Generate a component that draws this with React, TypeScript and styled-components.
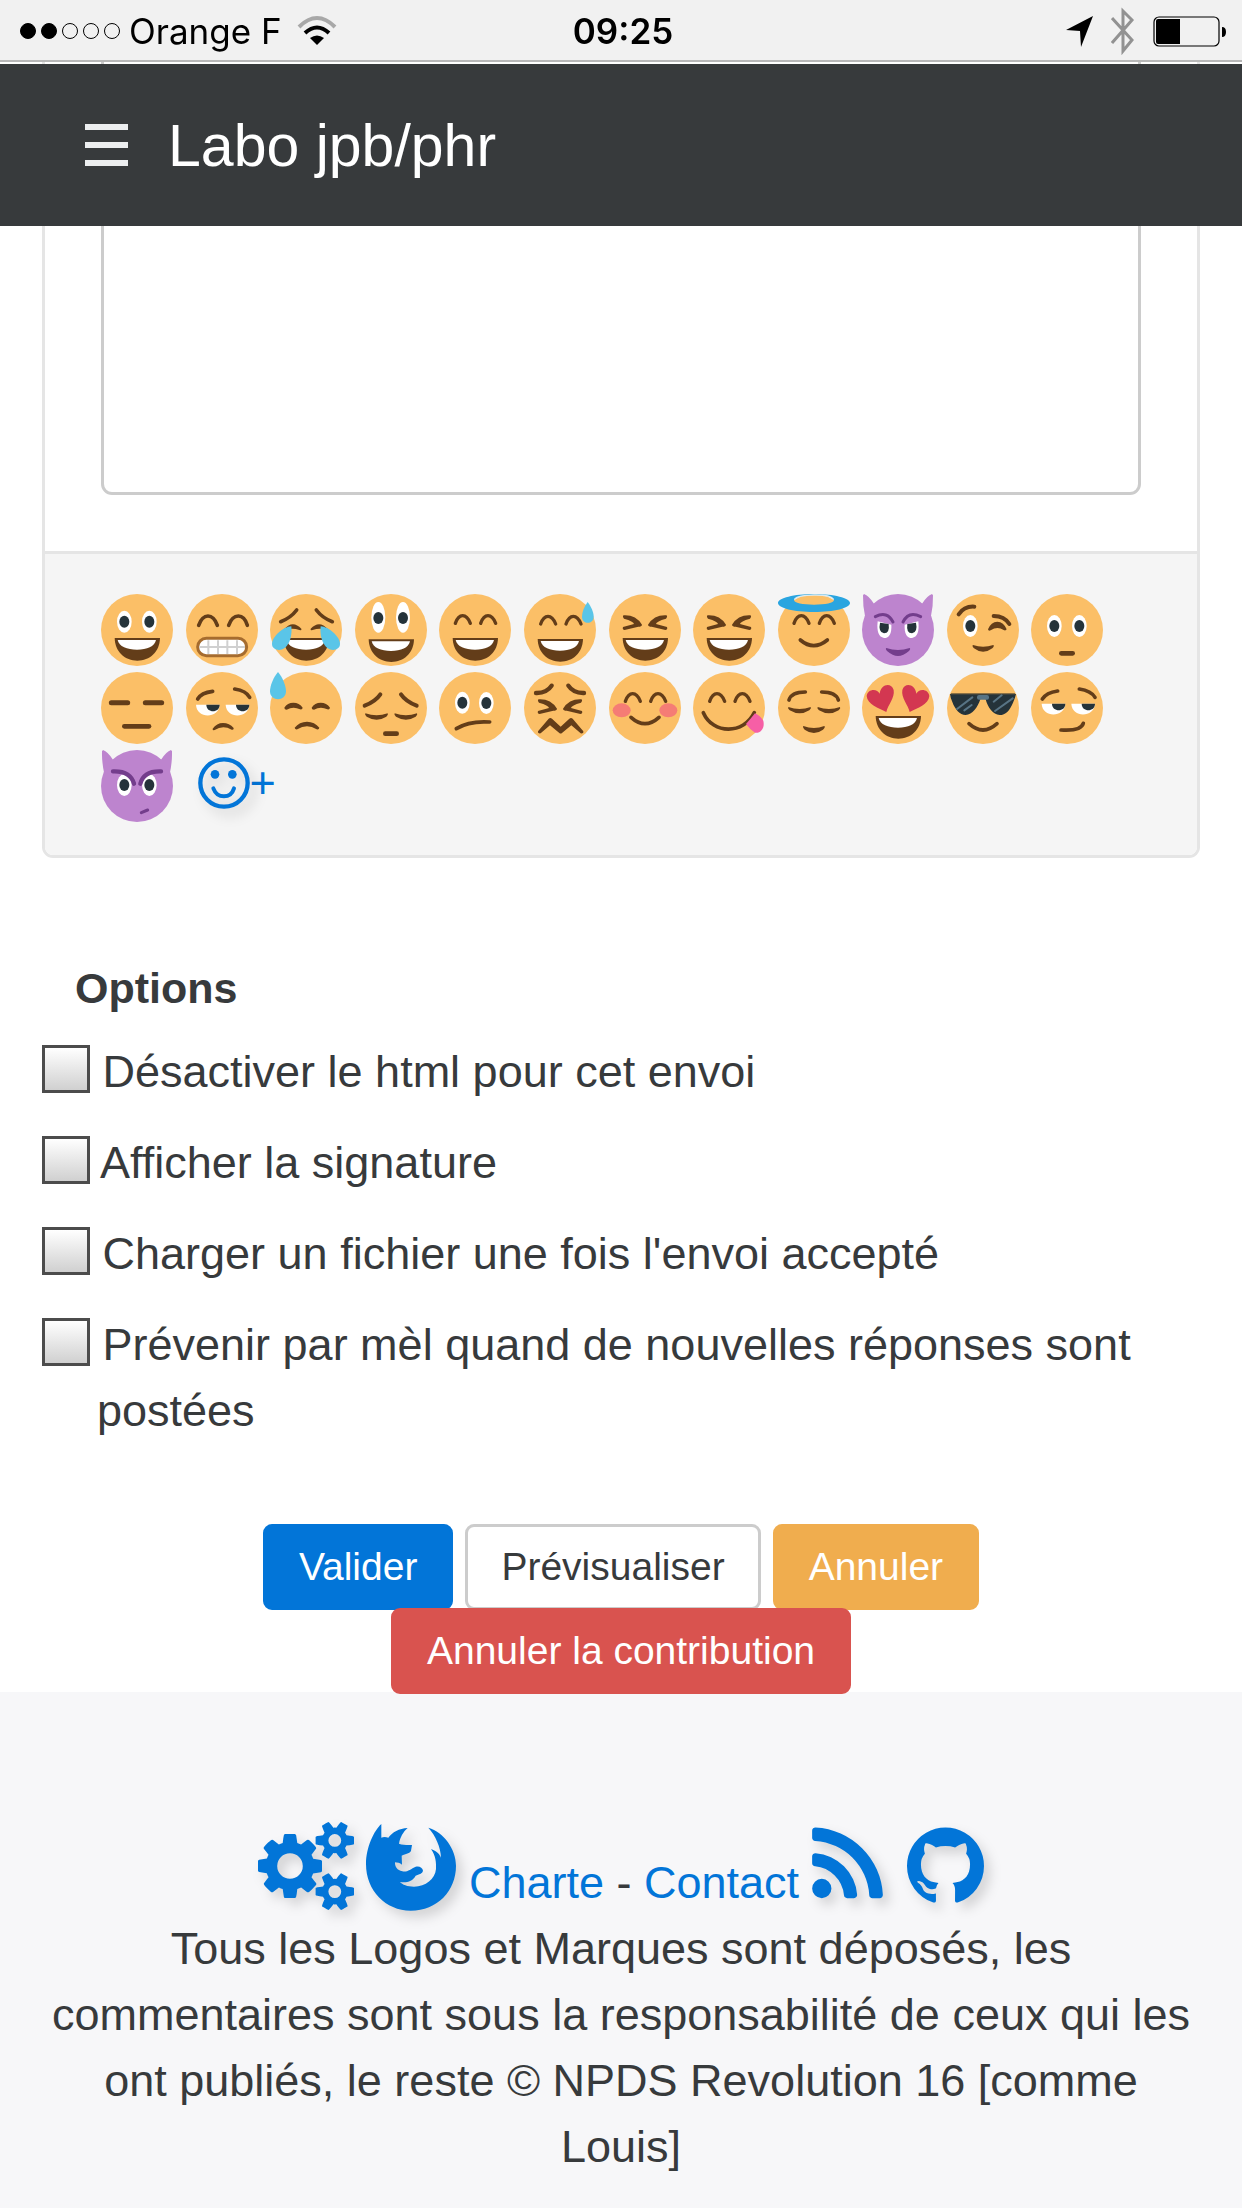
import React from "react";
import styled, { createGlobalStyle, css } from "styled-components";

const GlobalStyle = createGlobalStyle`
  *, *::before, *::after { box-sizing: border-box; }
  body {
    margin: 0;
    background: #fff;
    color: #373a3c;
    font-family: "Liberation Sans", Arial, sans-serif;
    font-size: 45px;
    line-height: 66px;
  }
`;

/* ---------- Layout ---------- */

const Page = styled.div`
  display: flex;
  flex-direction: column;
  min-height: 100vh;
`;

const TopBars = styled.div`
  position: fixed;
  top: 0;
  left: 0;
  right: 0;
  z-index: 10;
`;

const StatusBar = styled.div`
  display: grid;
  grid-template-columns: 1fr auto 1fr;
  align-items: center;
  height: 62px;
  margin-bottom: 2px;
  padding: 2px 16px 0 20px;
  background: #f1f1f1;
  border-bottom: 2px solid #b8b8b8;
  color: #000;
  font-family: Inter, Roboto, sans-serif;
  font-size: 35px;
  line-height: 58px;
`;

const StatusGroup = styled.div<{ $end?: boolean }>`
  display: flex;
  align-items: center;
  gap: ${(p) => (p.$end ? "18px" : "9px")};
  justify-content: ${(p) => (p.$end ? "flex-end" : "flex-start")};
`;

const Dots = styled.div`
  display: flex;
  gap: 5px;
`;

const Dot = styled.span<{ $on?: boolean }>`
  width: 16px;
  height: 16px;
  border: 1px solid #000;
  border-radius: 50%;
  background: ${(p) => (p.$on ? "#000" : "transparent")};
`;

const Clock = styled.time`
  font-weight: 600;
`;

const Navbar = styled.nav`
  display: flex;
  align-items: center;
  gap: 38px;
  height: 162px;
  padding: 0 84px;
  background: #373a3c;
`;

const MenuButton = styled.button`
  display: flex;
  padding: 0;
  border: 0;
  background: none;
  color: #eceeef;
`;

const Brand = styled.a`
  padding-top: 2px;
  color: #fff;
  font-size: 59px;
  line-height: 88px;
  text-decoration: none;
`;

const Main = styled.main`
  position: relative;
  padding: 0 42px;
`;

/* ---------- Message editor ---------- */

const Card = styled.div`
  border: 3px solid #e5e5e5;
  border-top: 0;
  border-radius: 0 0 11px 11px;
`;

const CardBody = styled.div`
  padding: 0 56px 56px;
`;

const Message = styled.textarea`
  display: block;
  width: 100%;
  height: 495px;
  padding: 16px 32px;
  border: 3px solid #ccc;
  border-radius: 11px;
  background: #fff;
  color: inherit;
  font: inherit;
  resize: none;
`;

const CardFooter = styled.div`
  padding: 40px 56px 33px;
  border-top: 3px solid #e5e5e5;
  border-radius: 0 0 8px 8px;
  background: #f5f5f5;
`;

const EmojiGrid = styled.div`
  display: grid;
  grid-template-columns: repeat(auto-fill, minmax(84px, 1fr));
  gap: 6px 0;
  margin-right: 25px;
`;

const EmojiButton = styled.button`
  display: flex;
  width: 72px;
  height: 72px;
  padding: 0;
  border: 0;
  background: none;
`;

const iconShadow = css`
  filter: drop-shadow(6px 7px 6px rgba(0, 0, 0, 0.14));
`;

const MoreSmileys = styled.a`
  display: flex;
  align-items: center;
  height: 66px;
  padding-left: 12px;
  color: #0275d8;
  text-decoration: none;
  svg {
    flex: none;
    ${iconShadow}
  }
`;

/* ---------- Options ---------- */

const Options = styled.fieldset`
  display: flex;
  flex-direction: column;
  gap: 25px;
  min-width: 0;
  margin: 97px 0 80px;
  padding: 0;
  border: 0;
`;

const OptionsTitle = styled.legend`
  margin-bottom: 18px;
  padding: 0 33px;
  font-size: 43px;
  font-weight: 700;
`;

const Option = styled.label`
  display: block;
  padding-left: 55px;
`;

const Checkbox = styled.input`
  appearance: none;
  width: 48px;
  height: 48px;
  margin: 0 0 0 -55px;
  border: 3px solid #4c4c4c;
  background: linear-gradient(#fff, #d0d0d0);
  vertical-align: -6px;
  &:checked {
    background: #0275d8;
  }
`;

const Actions = styled.div`
  display: flex;
  flex-wrap: wrap;
  justify-content: center;
  gap: 0 12px;
`;

const tones = {
  primary: css`
    background: #0275d8;
    border-color: #0275d8;
    color: #fff;
  `,
  secondary: css`
    background: #fff;
    border-color: #ccc;
    color: #373a3c;
  `,
  warning: css`
    background: #f0ad4e;
    border-color: #f0ad4e;
    color: #fff;
  `,
  danger: css`
    background: #d9534f;
    border-color: #d9534f;
    color: #fff;
  `,
};

const Button = styled.button<{ $tone: keyof typeof tones }>`
  height: 86px;
  margin-bottom: -2px;
  padding: 0 33px;
  border: 3px solid;
  border-radius: 9px;
  font-family: inherit;
  font-size: 39px;
  line-height: 58px;
  ${(p) => tones[p.$tone]}
`;

/* ---------- Footer ---------- */

const Footer = styled.footer`
  flex: 1;
  padding: 129px 42px 27px;
  background: #f7f7f9;
  text-align: center;
`;

const FooterText = styled.p`
  margin: 0;
`;

const FooterLink = styled.a`
  color: #0275d8;
  text-decoration: none;
`;

const Glyph = styled.svg<{ $spaced?: boolean }>`
  height: 90px;
  margin-left: ${(p) => (p.$spaced ? "12px" : "0")};
  vertical-align: -13px;
  fill: currentColor;
  ${iconShadow}
`;

/* ---------- Smileys: drawn on a 216-unit square ---------- */

const SKIN = "#fbbf67";
const BROWN = "#633d19";
const INK = "#25333a";
const PLUM = "#733d8c";

const Line = ({ d, w = 11, c = BROWN }: { d: string; w?: number; c?: string }) => (
  <path d={d} fill="none" stroke={c} strokeWidth={w} strokeLinecap="round" strokeLinejoin="round" />
);

const Fill = ({ d, c = BROWN }: { d: string; c?: string }) => <path d={d} fill={c} />;

const Eye = ({ x, y }: { x: number; y: number }) => (
  <>
    <ellipse cx={x} cy={y} rx="22" ry="33" fill="#fff" />
    <ellipse cx={x} cy={y} rx="15" ry="18" fill={INK} />
  </>
);

const Grin = ({ y = 132 }: { y?: number }) => (
  <g transform={`translate(0 ${y})`}>
    <Fill d="M41 0H177C176 42 146 68 109 68S42 42 41 0Z" />
    <Fill d="M50 6H165C161 26 138 35 108 35S54 26 50 6Z" c="#fff" />
  </g>
);

const HappyEyes = ({ dx = 0, y = 0 }: { dx?: number; y?: number }) => (
  <g transform={`translate(${dx} ${y})`}>
    <Line d="M49 88Q57 65 71 65T94 88" w={10} />
    <Line d="M125 88Q133 65 147 65T170 88" w={10} />
  </g>
);

const SqueezedEyes = ({ y = 0 }: { y?: number }) => (
  <g transform={`translate(0 ${y})`}>
    <Fill d="M44 64Q80 62 99 92Q98 98 88 98L47 108Q39 107 42 99L75 90Q74 82 45 74Q39 67 44 64Z" />
    <Fill d="M172 64Q136 62 117 92Q118 98 128 98L169 108Q177 107 174 99L141 90Q142 82 171 74Q177 67 172 64Z" />
  </g>
);

const ShutEyes = ({ y = 0 }: { y?: number }) => (
  <g transform={`translate(0 ${y})`}>
    <Fill d="M31 0Q65 12 98 0Q101 4 94 10Q65 28 35 10Q28 4 31 0Z" />
    <Fill d="M119 0Q153 12 186 0Q189 4 182 10Q153 28 123 10Q116 4 119 0Z" />
  </g>
);

const HalfEyes = () => (
  <>
    <Fill d="M30 98H101C99 140 32 142 30 98Z" c="#fff" />
    <Fill d="M61 98H101C101 124 61 124 61 98Z" c={INK} />
    <Fill d="M119 98H190C188 140 121 142 119 98Z" c="#fff" />
    <Fill d="M150 98H190C190 124 150 124 150 98Z" c={INK} />
  </>
);

const Horns = () => (
  <Fill d="M6 0Q20 4 38 32L10 72Q2 36 3 4ZM210 0Q196 4 178 32L206 72Q214 36 213 4Z" c="#bd84ce" />
);

const faces: { name: string; color?: string; art: React.ReactNode }[] = [
  { name: "Sourire", art: <><Eye x={70} y={83} /><Eye x={145} y={83} /><Grin /></> },
  {
    name: "Grimace",
    art: (
      <>
        <Line d="M38 94Q48 66 66 66T94 94" />
        <Line d="M128 94Q138 66 157 66T184 94" />
        <rect x="35" y="133" width="147" height="52" rx="26" fill="#fff" stroke="#a66c2e" strokeWidth="9" />
        <path d="M40 159H177M67 139V180M96 139V180M124 139V180M153 139V180" stroke="#d0d0d0" strokeWidth="6" />
      </>
    ),
  },
  {
    name: "Larmes de joie",
    art: (
      <>
        <Line d="M32 83Q62 72 80 48" />
        <Line d="M139 48Q157 72 187 83" />
        <Fill d="M42 106Q68 76 94 104Q96 110 88 108Q66 100 48 108Z" />
        <Fill d="M174 106Q148 76 122 104Q120 110 128 108Q150 100 168 108Z" />
        <Grin />
        <Fill d="M64 97C40 98 6 128 6 150C6 166 28 174 44 162C60 150 67 122 64 97Z" c="#5ac5e8" />
        <Fill d="M152 97C176 98 210 128 210 150C210 166 188 174 172 162C156 150 149 122 152 97Z" c="#5ac5e8" />
      </>
    ),
  },
  {
    name: "Grand sourire",
    art: (
      <>
        <ellipse cx="70" cy="70" rx="21" ry="46" fill="#fff" />
        <ellipse cx="144" cy="70" rx="21" ry="46" fill="#fff" />
        <ellipse cx="70" cy="72" rx="15" ry="18" fill={INK} />
        <ellipse cx="144" cy="72" rx="15" ry="18" fill={INK} />
        <Grin y={136} />
      </>
    ),
  },
  { name: "Rire", art: <><HappyEyes /><Grin /></> },
  {
    name: "Sueur",
    art: (
      <>
        <HappyEyes dx={1} y={2} />
        <Grin y={135} />
        <Fill d="M191 24C202 38 209 56 209 68C209 92 174 92 174 68C174 56 180 38 191 24Z" c="#5ac5e8" />
      </>
    ),
  },
  { name: "Éclat de rire", art: <><SqueezedEyes /><Grin /></> },
  { name: "Mort de rire", art: <><SqueezedEyes /><Grin /></> },
  {
    name: "Ange",
    art: (
      <>
        <HappyEyes dx={-1} />
        <Line d="M67 138Q107 172 148 138" />
        <path
          d="M108 0C168 0 216 12 216 27S168 54 108 54S0 42 0 27S48 0 108 0ZM108 3C74 3 48 9 48 18S74 32 108 32S168 27 168 18S142 3 108 3Z"
          fill="#2aa5e0"
          fillRule="evenodd"
        />
        <path d="M50 15Q60 4 108 3T166 15" fill="none" stroke="#dcebf0" strokeWidth="4" />
      </>
    ),
  },
  {
    name: "Démon souriant",
    color: "#bd84ce",
    art: (
      <>
        <Horns />
        <Fill d="M47 82L88 92Q90 132 66 132Q42 128 47 82Z" c="#fff" />
        <Fill d="M169 82L128 92Q126 132 150 132Q174 128 169 82Z" c="#fff" />
        <Fill d="M54 86L80 90Q84 118 66 118Q48 114 54 86Z" c={INK} />
        <Fill d="M162 86L136 90Q132 118 150 118Q168 114 162 86Z" c={INK} />
        <Line d="M40 68Q76 50 93 84" c={PLUM} w={9} />
        <Line d="M176 68Q140 50 123 84" c={PLUM} w={9} />
        <Fill d="M73 162Q108 174 143 162Q147 165 140 172Q108 200 76 172Q69 165 73 162Z" c={PLUM} />
      </>
    ),
  },
  {
    name: "Clin d'œil",
    art: (
      <>
        <Line d="M35 61Q52 36 82 38" w={12} />
        <Line d="M140 66Q172 66 187 90" w={12} />
        <Eye x={70} y={96} />
        <Fill d="M123 106Q132 83 151 83T179 106Q176 111 170 108Q151 96 131 109Q124 112 123 106Z" />
        <Fill d="M78 153Q108 164 139 153Q143 156 136 163Q108 184 81 163Q74 156 78 153Z" />
      </>
    ),
  },
  {
    name: "Sans expression",
    art: <><Eye x={70} y={96} /><Eye x={145} y={96} /><Line d="M91 178H125" w={14} /></>,
  },
  {
    name: "Neutre",
    art: <><Line d="M31 92H80" w={15} /><Line d="M133 92H182" w={15} /><Line d="M70 163H144" w={14} /></>,
  },
  {
    name: "Blasé",
    art: (
      <>
        <Line d="M35 81Q46 62 80 58" />
        <Line d="M146 51Q180 56 191 76" />
        <HalfEyes />
        <Fill d="M80 170Q92 153 111 153T143 168Q144 175 137 173Q111 158 86 174Q79 176 80 170Z" />
      </>
    ),
  },
  {
    name: "Abattu",
    art: (
      <>
        <Fill d="M24 0C38 16 48 42 48 58C48 90 0 90 0 58C0 42 10 16 24 0Z" c="#5ac5e8" />
        <Fill d="M43 107Q52 92 70 92T98 107Q97 114 90 112Q70 102 50 113Q43 113 43 107Z" />
        <Fill d="M125 107Q134 92 152 92T180 107Q179 114 172 112Q152 102 132 113Q125 113 125 107Z" />
        <Fill d="M74 167Q88 149 111 149T148 167Q147 174 140 172Q111 154 82 172Q75 173 74 167Z" />
      </>
    ),
  },
  {
    name: "Pensif",
    art: (
      <>
        <Line d="M29 101Q62 88 76 67" w={12} />
        <Line d="M138 67Q152 88 185 101" w={12} />
        <ShutEyes y={124} />
        <Line d="M91 185H125" w={14} />
      </>
    ),
  },
  {
    name: "Perplexe",
    art: <><Eye x={70} y={92} /><Eye x={142} y={93} /><Line d="M52 170Q90 146 152 150" /></>,
  },
  {
    name: "Exaspéré",
    art: (
      <>
        <Line d="M36 63Q68 64 83 41" w={13} />
        <Line d="M180 63Q148 64 133 41" w={13} />
        <SqueezedEyes y={18} />
        <Fill d="M42 178L74 140Q79 136 84 140L110 164L136 140Q141 136 146 140L178 178Q180 186 170 184L142 160L114 183Q110 186 106 183L78 160L50 184Q40 186 42 178Z" />
      </>
    ),
  },
  {
    name: "Rougissant",
    art: (
      <>
        <ellipse cx="38" cy="115" rx="27" ry="21" fill="#f57c75" />
        <ellipse cx="178" cy="115" rx="27" ry="21" fill="#f57c75" />
        <HappyEyes />
        <Line d="M66 136Q108 174 150 136" />
      </>
    ),
  },
  {
    name: "Miam",
    art: (
      <>
        <HappyEyes dx={1} />
        <Line d="M31 122C60 188 152 188 184 122" />
        <Fill d="M186 124Q200 130 211 146C216 168 204 184 186 182Q172 174 159 156Q170 144 186 124Z" c="#f65fa6" />
      </>
    ),
  },
  {
    name: "Soulagé",
    art: (
      <>
        <Line d="M33 84Q40 60 82 60" />
        <Line d="M131 60Q174 60 181 84" />
        <ShutEyes y={105} />
        <Fill d="M76 162Q108 174 139 162Q143 165 135 173Q108 193 80 173Q73 165 76 162Z" />
      </>
    ),
  },
  {
    name: "Amoureux",
    art: (
      <>
        <Fill d="M73 120C50 108 16 98 14 72C16 50 46 48 53 65C56 36 88 30 95 54C99 78 78 98 73 120Z" c="#d33751" />
        <Fill d="M143 120C166 108 200 98 202 72C200 50 170 48 163 65C160 36 128 30 121 54C117 78 138 98 143 120Z" c="#d33751" />
        <Grin />
      </>
    ),
  },
  {
    name: "Lunettes de soleil",
    art: (
      <>
        <Fill d="M9 66H207Q204 80 198 92C188 116 176 129 158 129C138 129 122 106 116 82Q108 76 100 82C92 106 76 129 56 129C38 129 24 112 16 90Q10 76 9 66Z" c={INK} />
        <path d="M12 65H204" stroke="#8b7045" strokeWidth="4" />
        <path d="M30 111L76 76M52 115L74 99M140 89L164 70M144 117L197 79" stroke="#587485" strokeWidth="6" strokeLinecap="round" />
        <rect x="90" y="69" width="36" height="14" rx="6" fill="#587485" />
        <Line d="M66 155Q108 193 150 155" />
      </>
    ),
  },
  {
    name: "Narquois",
    art: (
      <>
        <Line d="M34 81Q46 62 80 57" />
        <Line d="M145 51Q180 56 192 76" />
        <g transform="translate(2 -3)"><HalfEyes /></g>
        <Line d="M90 174Q150 178 157 154" />
      </>
    ),
  },
  {
    name: "Démon fâché",
    color: "#bd84ce",
    art: (
      <>
        <Horns />
        <Eye x={70} y={105} />
        <Eye x={145} y={105} />
        <Line d="M36 64Q88 62 99 101" c={PLUM} w={13} />
        <Line d="M180 64Q128 62 118 101" c={PLUM} w={13} />
        <Line d="M121 188L140 180" c={PLUM} w={9} />
      </>
    ),
  },
];

const options = [
  { id: "html", label: "Désactiver le html pour cet envoi" },
  { id: "signature", label: "Afficher la signature" },
  { id: "upload", label: "Charger un fichier une fois l'envoi accepté" },
  { id: "notify", label: "Prévenir par mèl quand de nouvelles réponses sont postées" },
];

export default function App() {
  return (
    <Page>
      <GlobalStyle />
      <TopBars>
        <StatusBar>
          <StatusGroup>
            <Dots>
              <Dot $on />
              <Dot $on />
              <Dot />
              <Dot />
              <Dot />
            </Dots>
            <span>Orange F</span>
            <svg width="54" height="34" viewBox="0 0 54 34" fill="none">
              <path d="M8 13Q26 -5 44 13" stroke="#a8a8a8" strokeWidth="4" />
              <path d="M14 19Q26 8 38 19" stroke="#000" strokeWidth="4" />
              <path d="M19 24Q26 19 33 24L26 31Z" fill="#000" />
            </svg>
          </StatusGroup>
          <Clock>09:25</Clock>
          <StatusGroup $end>
            <svg width="27" height="31" viewBox="0 0 27 31">
              <path d="M0 14L27 0L15 31L14 15Z" fill="#000" />
            </svg>
            <svg width="24" height="50" viewBox="0 0 24 50" fill="none">
              <path d="M1 12L21 34L12 45V5L21 14L1 37" stroke="#929292" strokeWidth="3" />
            </svg>
            <svg width="73" height="31" viewBox="0 0 73 31">
              <rect x="1" y="1" width="65" height="29" rx="5" fill="none" stroke="#000" strokeWidth="1.2" />
              <path d="M5 3H27V28H5Q3 28 3 26V5Q3 3 5 3Z" fill="#000" />
              <path d="M69 11Q73 11 73 16T69 21Z" fill="#000" />
            </svg>
          </StatusGroup>
        </StatusBar>
        <Navbar>
          <MenuButton aria-label="Menu">
            <svg width="46" height="42" viewBox="0 0 46 42">
              <path d="M1 3H44M1 21H44M1 39H44" stroke="currentColor" strokeWidth="6" />
            </svg>
          </MenuButton>
          <Brand href="#">Labo jpb/phr</Brand>
        </Navbar>
      </TopBars>

      <Main>
        <Card>
          <CardBody>
            <Message aria-label="Message" />
          </CardBody>
          <CardFooter>
            <EmojiGrid>
              {faces.map(({ name, color = SKIN, art }) => (
                <EmojiButton key={name} type="button" aria-label={name}>
                  <svg width="72" height="72" viewBox="0 0 216 216">
                    <circle cx="108" cy="108" r="108" fill={color} />
                    {art}
                  </svg>
                </EmojiButton>
              ))}
              <MoreSmileys href="#" aria-label="Plus de smileys">
                <svg width="52" height="52" viewBox="0 0 156 156" fill="none" stroke="#0275d8">
                  <circle cx="78" cy="78" r="71" strokeWidth="13" />
                  <circle cx="51" cy="52" r="13" fill="#0275d8" stroke="none" />
                  <circle cx="103" cy="52" r="13" fill="#0275d8" stroke="none" />
                  <path d="M46 94C58 126 98 126 108 94" strokeWidth="12" strokeLinecap="round" />
                </svg>
                <span>+</span>
              </MoreSmileys>
            </EmojiGrid>
          </CardFooter>
        </Card>

        <Options>
          <OptionsTitle>Options</OptionsTitle>
          {options.map(({ id, label }) => (
            <Option key={id} htmlFor={id}>
              <Checkbox type="checkbox" id={id} /> {label}
            </Option>
          ))}
        </Options>

        <Actions>
          <Button $tone="primary">Valider</Button>
          <Button $tone="secondary">Prévisualiser</Button>
          <Button $tone="warning">Annuler</Button>
          <Button $tone="danger">Annuler la contribution</Button>
        </Actions>
      </Main>

      <Footer>
        <FooterText>
          <FooterLink href="#" aria-label="Administration">
            <Glyph width="96" viewBox="0 0 1920 1792">
              <path d="M896 896q0-106-75-181t-181-75-181 75-75 181 75 181 181 75 181-75 75-181zm768 512q0-52-38-90t-90-38-90 38-38 90q0 53 37.5 90.5t90.5 37.5 90.5-37.5 37.5-90.5zm0-1024q0-52-38-90t-90-38-90 38-38 90q0 53 37.5 90.5t90.5 37.5 90.5-37.5 37.5-90.5zm-384 421v185q0 10-7 19.5t-16 10.5l-155 24q-11 35-32 76 34 48 90 115 7 11 7 20 0 12-7 19-23 30-82.5 89.5t-78.5 59.5q-11 0-21-7l-115-90q-37 19-77 31-11 108-23 155-7 24-30 24h-186q-11 0-20-7.5t-10-17.5l-23-153q-34-10-75-31l-118 89q-7 7-20 7-11 0-21-8-144-133-144-160 0-9 7-19 10-14 41-53t47-61q-23-44-35-82l-152-24q-10-1-17-9.5t-7-19.5v-185q0-10 7-19.5t16-10.5l155-24q11-35 32-76-34-48-90-115-7-11-7-20 0-12 7-20 22-30 82-89t79-59q11 0 21 7l115 90q34-18 77-32 11-108 23-154 7-24 30-24h186q11 0 20 7.5t10 17.5l23 153q34 10 75 31l118-89q8-7 20-7 11 0 21 8 144 133 144 160 0 8-7 19-12 16-42 54t-45 60q23 48 34 82l152 23q10 2 17 10.5t7 19.5zm640 533v140q0 16-149 31-12 27-30 52 51 113 51 138 0 4-4 7-122 71-124 71-8 0-46-47t-52-68q-20 2-30 2t-30-2q-14 21-52 68t-46 47q-2 0-124-71-4-3-4-7 0-25 51-138-18-25-30-52-149-15-149-31v-140q0-16 149-31 13-29 30-52-51-113-51-138 0-4 4-7 4-2 35-20t59-34 30-16q8 0 46 46.5t52 67.5q20-2 30-2t30 2q51-71 92-112l6-2q4 0 124 70 4 3 4 7 0 25-51 138 17 23 30 52 149 15 149 31zm0-1024v140q0 16-149 31-12 27-30 52 51 113 51 138 0 4-4 7-122 71-124 71-8 0-46-47t-52-68q-20 2-30 2t-30-2q-14 21-52 68t-46 47q-2 0-124-71-4-3-4-7 0-25 51-138-18-25-30-52-149-15-149-31v-140q0-16 149-31 13-29 30-52-51-113-51-138 0-4 4-7 4-2 35-20t59-34 30-16q8 0 46 46.5t52 67.5q20-2 30-2t30 2q51-71 92-112l6-2q4 0 124 70 4 3 4 7 0 25-51 138 17 23 30 52 149 15 149 31z" />
            </Glyph>
          </FooterLink>{" "}
          <FooterLink href="#" aria-label="Firefox">
            <Glyph width="90" viewBox="6 6 270 270">
              <path d="M52 15C30 35 6 85 6 135C6 215 65 275 140 275C220 275 276 215 276 140C276 90 240 40 193 26C215 50 230 85 231 116C225 102 215 95 201 90C215 110 217 130 216 150C213 180 185 203 150 203C130 203 115 197 108 189C130 191 145 188 155 170C165 165 175 165 177 155C176 145 165 140 155 143C140 150 130 160 115 157C100 155 92 142 93 130C100 130 108 132 114 137L113 110C125 104 138 103 141 95L144 78C130 79 117 78 105 74C108 55 118 38 131 27C105 28 85 40 73 56C65 53 58 53 52 56Z" />
            </Glyph>
          </FooterLink>{" "}
          <FooterLink href="#">Charte</FooterLink> - <FooterLink href="#">Contact</FooterLink>{" "}
          <FooterLink href="#" aria-label="Flux RSS">
            <Glyph width="71" viewBox="192 0 1408 1792">
              <path d="M576 1344q0 80-56 136t-136 56-136-56-56-136 56-136 136-56 136 56 56 136zm512 123q2 28-17 48-18 21-47 21h-135q-25 0-43-16.5t-20-41.5q-22-229-184.5-391.5t-391.5-184.5q-25-2-41.5-20t-16.5-43v-135q0-29 21-47 17-17 43-17h5q160 13 306 80.5t259 181.5q114 113 181.5 259t80.5 306zm512 2q2 27-18 47-18 20-46 20h-143q-26 0-44.5-17.5t-19.5-42.5q-12-215-101-408.5t-231.5-336-336-231.5-408.5-102q-25-1-42.5-19.5t-17.5-43.5v-143q0-28 20-46 18-18 44-18h3q262 13 501.5 120t425.5 294q187 186 294 425.5t120 501.5z" />
            </Glyph>
          </FooterLink>{" "}
          <FooterLink href="#" aria-label="GitHub">
            <Glyph $spaced width="77" viewBox="128 0 1536 1792">
              <path d="M896 128q209 0 385.5 103t279.5 279.5 103 385.5q0 251-146.5 451.5t-378.5 277.5q-27 5-40-7t-13-30q0-3 .5-76.5t.5-134.5q0-97-52-142 57-6 102.5-18t94-39 81-66.5 53-105 20.5-150.5q0-119-79-206 37-91-8-204-28-9-81 11t-92 44l-38 24q-93-26-192-26t-192 26q-16-11-42.5-27t-83.5-38.5-85-13.5q-45 113-8 204-79 87-79 206 0 85 20.5 150t52.5 105 80.5 67 94 39 102.5 18q-39 36-49 103-21 10-45 15t-57 5-65.5-21.5-55.5-62.5q-19-32-48.5-52t-49.5-24l-20-3q-21 0-29 4.5t-5 11.5 9 14 13 12l7 5q22 10 43.5 38t31.5 51l10 23q13 38 44 61.5t67 30 69.5 7 55.5-3.5l23-4q0 38 .5 88.5t.5 54.5q0 18-13 30t-40 7q-232-77-378.5-277.5t-146.5-451.5q0-209 103-385.5t279.5-279.5 385.5-103z" />
            </Glyph>
          </FooterLink>
        </FooterText>
        <FooterText>
          Tous les Logos et Marques sont déposés, les commentaires sont sous la responsabilité de ceux qui les ont
          publiés, le reste © NPDS Revolution 16 [comme Louis]
        </FooterText>
      </Footer>
    </Page>
  );
}
